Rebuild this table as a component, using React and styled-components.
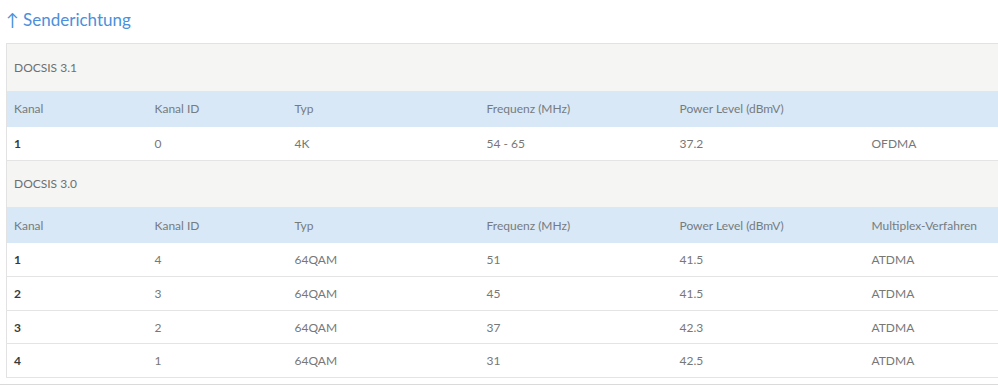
import React from "react";
import styled, { createGlobalStyle } from "styled-components";

const upstream31 = [
    { kanal: "1", id: "0", typ: "4K", freq: "54 - 65", power: "37.2", mode: "OFDMA" },
];

const upstream30 = [
    { kanal: "1", id: "4", typ: "64QAM", freq: "51", power: "41.5", mode: "ATDMA" },
    { kanal: "2", id: "3", typ: "64QAM", freq: "45", power: "41.5", mode: "ATDMA" },
    { kanal: "3", id: "2", typ: "64QAM", freq: "37", power: "42.3", mode: "ATDMA" },
    { kanal: "4", id: "1", typ: "64QAM", freq: "31", power: "42.5", mode: "ATDMA" },
];

const colWidths = [141, 140, 192, 193, 192, 300];

const App = () => {
    return (
        <>
            <GlobalStyle />
            <Page>
                <Heading>↑ Senderichtung</Heading>
                <Table>
                    <colgroup>
                        {colWidths.map((w, i) => <col key={i} style={{ width: w }} />)}
                    </colgroup>
                    <tbody>
                        <GroupRow>
                            <td colSpan={6}>DOCSIS 3.1</td>
                        </GroupRow>
                        <HeadRow>
                            <td>Kanal</td>
                            <td>Kanal ID</td>
                            <td>Typ</td>
                            <td>Frequenz (MHz)</td>
                            <td>Power Level (dBmV)</td>
                            <td></td>
                        </HeadRow>
                        {upstream31.map((r) => (
                            <DataRow key={"a" + r.kanal}>
                                <td><b>{r.kanal}</b></td>
                                <td>{r.id}</td>
                                <td>{r.typ}</td>
                                <td>{r.freq}</td>
                                <td>{r.power}</td>
                                <td>{r.mode}</td>
                            </DataRow>
                        ))}
                        <GroupRow>
                            <td colSpan={6}>DOCSIS 3.0</td>
                        </GroupRow>
                        <HeadRow>
                            <td>Kanal</td>
                            <td>Kanal ID</td>
                            <td>Typ</td>
                            <td>Frequenz (MHz)</td>
                            <td>Power Level (dBmV)</td>
                            <td>Multiplex-Verfahren</td>
                        </HeadRow>
                        {upstream30.map((r) => (
                            <DataRow key={"b" + r.kanal}>
                                <td><b>{r.kanal}</b></td>
                                <td>{r.id}</td>
                                <td>{r.typ}</td>
                                <td>{r.freq}</td>
                                <td>{r.power}</td>
                                <td>{r.mode}</td>
                            </DataRow>
                        ))}
                    </tbody>
                </Table>
                <Divider />
            </Page>
        </>
    );
};

const GlobalStyle = createGlobalStyle`
body {
    margin: 0;
    background: #fff;
    font-family: "Lato", "Open Sans", sans-serif;
    overflow: hidden;
}
`;

const Page = styled.div`
width: 998px;
height: 386px;
overflow: hidden;
`;

const Heading = styled.h2`
margin: 0;
padding: 9px 0 0 6px;
height: 43px;
box-sizing: border-box;
font-size: 17px;
font-weight: 400;
color: #4a90dc;
line-height: 22px;
`;

const Table = styled.table`
margin-left: 6px;
width: 1158px;
border-collapse: collapse;
table-layout: fixed;
border-top: 1px solid #e2e2e2;
border-left: 1px solid #e2e2e2;
font-size: 12px;
color: #777;

td { padding: 0 0 0 7px; white-space: nowrap; }
`;

const GroupRow = styled.tr`
height: 47px;
background: #f5f5f4;
color: #6f6f6f;
`;

const HeadRow = styled.tr`
height: 36px;
background: #d8e8f6;
color: #767b80;
`;

const DataRow = styled.tr`
height: 33.6px;
background: #fff;
border-bottom: 1px solid #e4e4e4;
b { color: #3a3a3a; font-weight: 700; }
`;

const Divider = styled.div`
margin-top: 6px;
height: 1px;
background: #dadada;
`;

export default App;
